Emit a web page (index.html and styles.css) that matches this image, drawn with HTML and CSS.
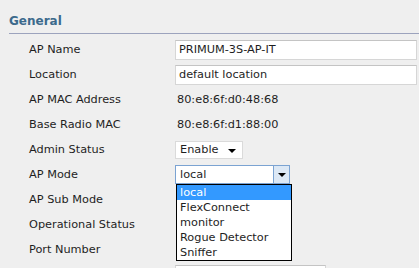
FILE: index.html
```html
<!DOCTYPE html>
<html lang="en">
<head>
  <meta charset="UTF-8" />
  <title>AP Details - General</title>
  <link rel="stylesheet" href="styles.css">
</head>
<body>
  <div class="section">
    <h2 class="section-title">General</h2>
    <div class="form-grid">
      <div class="label">AP Name</div>
      <div class="field"><div class="text-input wide">PRIMUM-3S-AP-IT</div></div>

      <div class="label">Location</div>
      <div class="field"><div class="text-input wide">default location</div></div>

      <div class="label">AP MAC Address</div>
      <div class="field"><span class="value">80:e8:6f:d0:48:68</span></div>

      <div class="label">Base Radio MAC</div>
      <div class="field"><span class="value">80:e8:6f:d1:88:00</span></div>

      <div class="label">Admin Status</div>
      <div class="field">
        <div class="select admin">Enable<span class="caret"></span></div>
      </div>

      <div class="label">AP Mode</div>
      <div class="field">
        <div class="select mode open">
          local
          <span class="select-btn"><span class="caret"></span></span>
          <ul class="options">
            <li class="selected">local</li>
            <li>FlexConnect</li>
            <li>monitor</li>
            <li>Rogue Detector</li>
            <li>Sniffer</li>
          </ul>
        </div>
      </div>

      <div class="label">AP Sub Mode</div>
      <div class="field"></div>

      <div class="label">Operational Status</div>
      <div class="field"></div>

      <div class="label">Port Number</div>
      <div class="field"></div>

      <div class="label"></div>
      <div class="field"><div class="text-input short"></div></div>
    </div>
  </div>
</body>
</html>
```

FILE: styles.css
```css
html, body { margin: 0; padding: 0; }
body { font-family: "DejaVu Sans", Verdana, sans-serif; font-size: 11.3px; background: #efefef; color: #1e1e1e; overflow: hidden; height: 268px; }
.section { padding: 13px 0 0 9px; }
.section-title { margin: 0; font-size: 12px; line-height: 16px; font-weight: bold; color: #3c6a8c; padding: 0 0 4px; border-bottom: 1px solid #9ca3bd; }
.form-grid { display: grid; grid-template-columns: 166px 1fr; grid-auto-rows: 25px; margin-top: 3px; }
.label { padding-left: 20px; display: flex; align-items: center; }
.field { display: flex; align-items: center; }
.value { padding-left: 2px; }
.text-input { box-sizing: border-box; height: 20px; background: #fff; border: 1px solid #d6d6d6; border-top-color: #c4c4c4; padding: 0 3px; line-height: 18px; }
.text-input.wide { width: 242px; }
.text-input.short { width: 151px; }
.select { position: relative; box-sizing: border-box; background: #fff; border: 1px solid #dadada; display: flex; align-items: center; padding-left: 4px; }
.select.admin { width: 68px; height: 18px; }
.select.admin .caret { position: absolute; right: 6px; top: 7px; }
.caret { width: 0; height: 0; border-left: 4px solid transparent; border-right: 4px solid transparent; border-top: 4px solid #000; }
.select.mode { width: 115px; height: 19px; border-color: #7ba3d2; }
.select-btn { position: absolute; right: 0; top: 0; bottom: 0; width: 16px; box-sizing: border-box; background: #dce8f5; border-left: 1px solid #7ba3d2; display: flex; align-items: center; justify-content: center; }
.options { position: absolute; left: 0; top: 18px; width: 116px; box-sizing: border-box; margin: 0; padding: 0; list-style: none; background: #fff; border: 1px solid #000; z-index: 2; }
.options li { height: 15px; line-height: 15px; padding-left: 3px; }
.options li.selected { background: #3399ff; color: #fff; }
```
